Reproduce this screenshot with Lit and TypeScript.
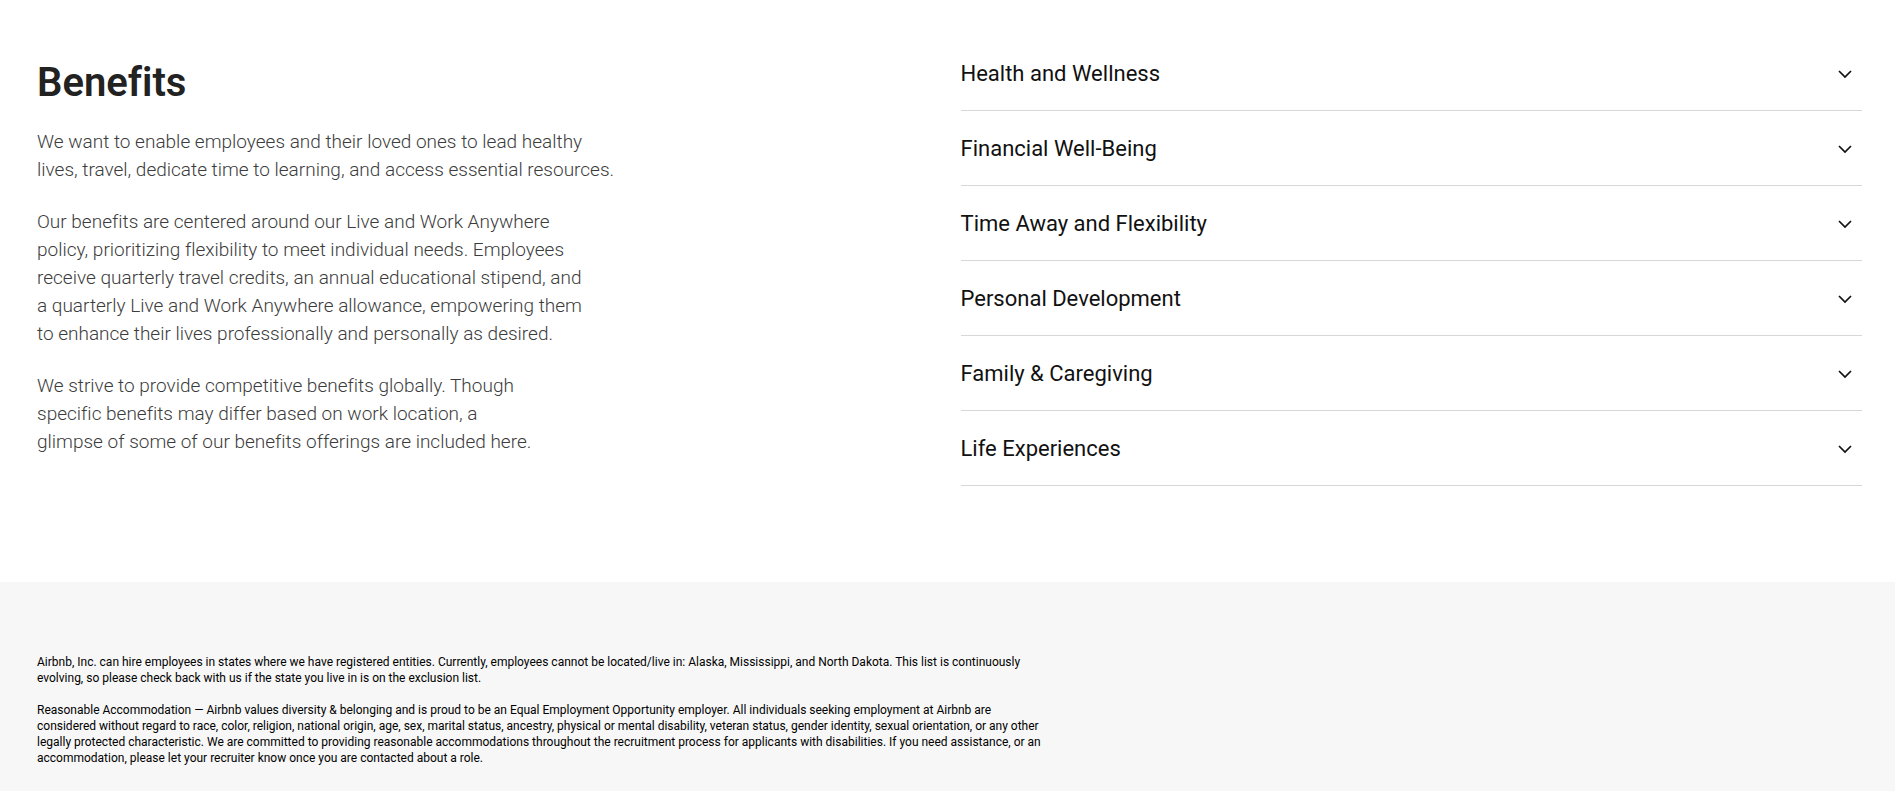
import { LitElement, html, css } from "lit";
import { customElement, property, state } from "lit/decorators.js";

const TOPICS = [
  "Health and Wellness",
  "Financial Well-Being",
  "Time Away and Flexibility",
  "Personal Development",
  "Family & Caregiving",
  "Life Experiences",
];

/** One row of the accordion: a heading button with a chevron at its end. */
@customElement("benefit-item")
export class BenefitItem extends LitElement {
  @property() label = "";
  @state() private open = false;

  static styles = css`
    :host {
      display: block;
      border-bottom: 1px solid #d8d8d8;
    }
    .heading {
      margin: 0;
      font: inherit;
    }
    .toggle {
      display: flex;
      align-items: center;
      justify-content: space-between;
      width: 100%;
      padding: 25px 9px 23px 0;
      border: 0;
      background: none;
      color: #111;
      font: inherit;
      font-size: 22px;
      line-height: 26px;
      text-align: left;
      cursor: pointer;
    }
    .chevron {
      flex: none;
      width: 16px;
      height: 16px;
      fill: none;
      stroke: currentColor;
      stroke-width: 1.7;
    }
    .chevron.open {
      transform: rotate(180deg);
    }
  `;

  render() {
    return html`
      <h3 class="heading">
        <button
          class="toggle"
          type="button"
          aria-expanded=${this.open ? "true" : "false"}
          @click=${() => (this.open = !this.open)}
        >
          <span>${this.label}</span>
          <svg class="chevron ${this.open ? "open" : ""}" viewBox="0 0 16 16" aria-hidden="true">
            <path d="M2 5l6 6 6-6" />
          </svg>
        </button>
      </h3>
    `;
  }
}

@customElement("app-root")
export class AppRoot extends LitElement {
  static styles = css`
    :host {
      display: flex;
      flex-direction: column;
      min-height: 100vh;
      background: #fff;
      font-family: Roboto, "Liberation Sans", sans-serif;
      font-variant-ligatures: none;
    }
    .benefits {
      display: grid;
      grid-template-columns: 1fr 1fr;
      gap: 22px;
      padding: 36px 33px 96px 37px;
    }
    .intro {
      padding-top: 24px;
    }
    .title {
      margin: 0 0 22px;
      color: #222;
      font-size: 40px;
      font-weight: 600;
      line-height: 46px;
    }
    .text {
      margin: 0 0 24px;
      color: #3c3c3c;
      font-size: 19px;
      font-weight: 300;
      line-height: 28px;
    }
    .legal {
      flex: 1;
      padding: 72px 33px 24px 37px;
      background: #f7f7f7;
    }
    .note {
      max-width: 1040px;
      margin: 0 0 16px;
      color: #000;
      font-size: 12px;
      line-height: 16px;
    }
    @media (max-width: 900px) {
      .benefits {
        grid-template-columns: 1fr;
      }
    }
  `;

  render() {
    return html`
      <section class="benefits">
        <div class="intro">
          <h2 class="title">Benefits</h2>
          <p class="text">
            We want to enable employees and their loved ones to lead healthy<br />
            lives, travel, dedicate time to learning, and access essential resources.
          </p>
          <p class="text">
            Our benefits are centered around our Live and Work Anywhere<br />
            policy, prioritizing flexibility to meet individual needs. Employees<br />
            receive quarterly travel credits, an annual educational stipend, and<br />
            a quarterly Live and Work Anywhere allowance, empowering them<br />
            to enhance their lives professionally and personally as desired.
          </p>
          <p class="text">
            We strive to provide competitive benefits globally. Though<br />
            specific benefits may differ based on work location, a<br />
            glimpse of some of our benefits offerings are included here.
          </p>
        </div>
        <div>${TOPICS.map((t) => html`<benefit-item .label=${t}></benefit-item>`)}</div>
      </section>
      <footer class="legal">
        <p class="note">
          Airbnb, Inc. can hire employees in states where we have registered entities. Currently,
          employees cannot be located/live in: Alaska, Mississippi, and North Dakota. This list is
          continuously<br />
          evolving, so please check back with us if the state you live in is on the exclusion list.
        </p>
        <p class="note">
          Reasonable Accommodation — Airbnb values diversity &amp; belonging and is proud to be an
          Equal Employment Opportunity employer. All individuals seeking employment at Airbnb are<br />
          considered without regard to race, color, religion, national origin, age, sex, marital
          status, ancestry, physical or mental disability, veteran status, gender identity, sexual
          orientation, or any other<br />
          legally protected characteristic. We are committed to providing reasonable accommodations
          throughout the recruitment process for applicants with disabilities. If you need
          assistance, or an<br />
          accommodation, please let your recruiter know once you are contacted about a role.
        </p>
      </footer>
    `;
  }
}
